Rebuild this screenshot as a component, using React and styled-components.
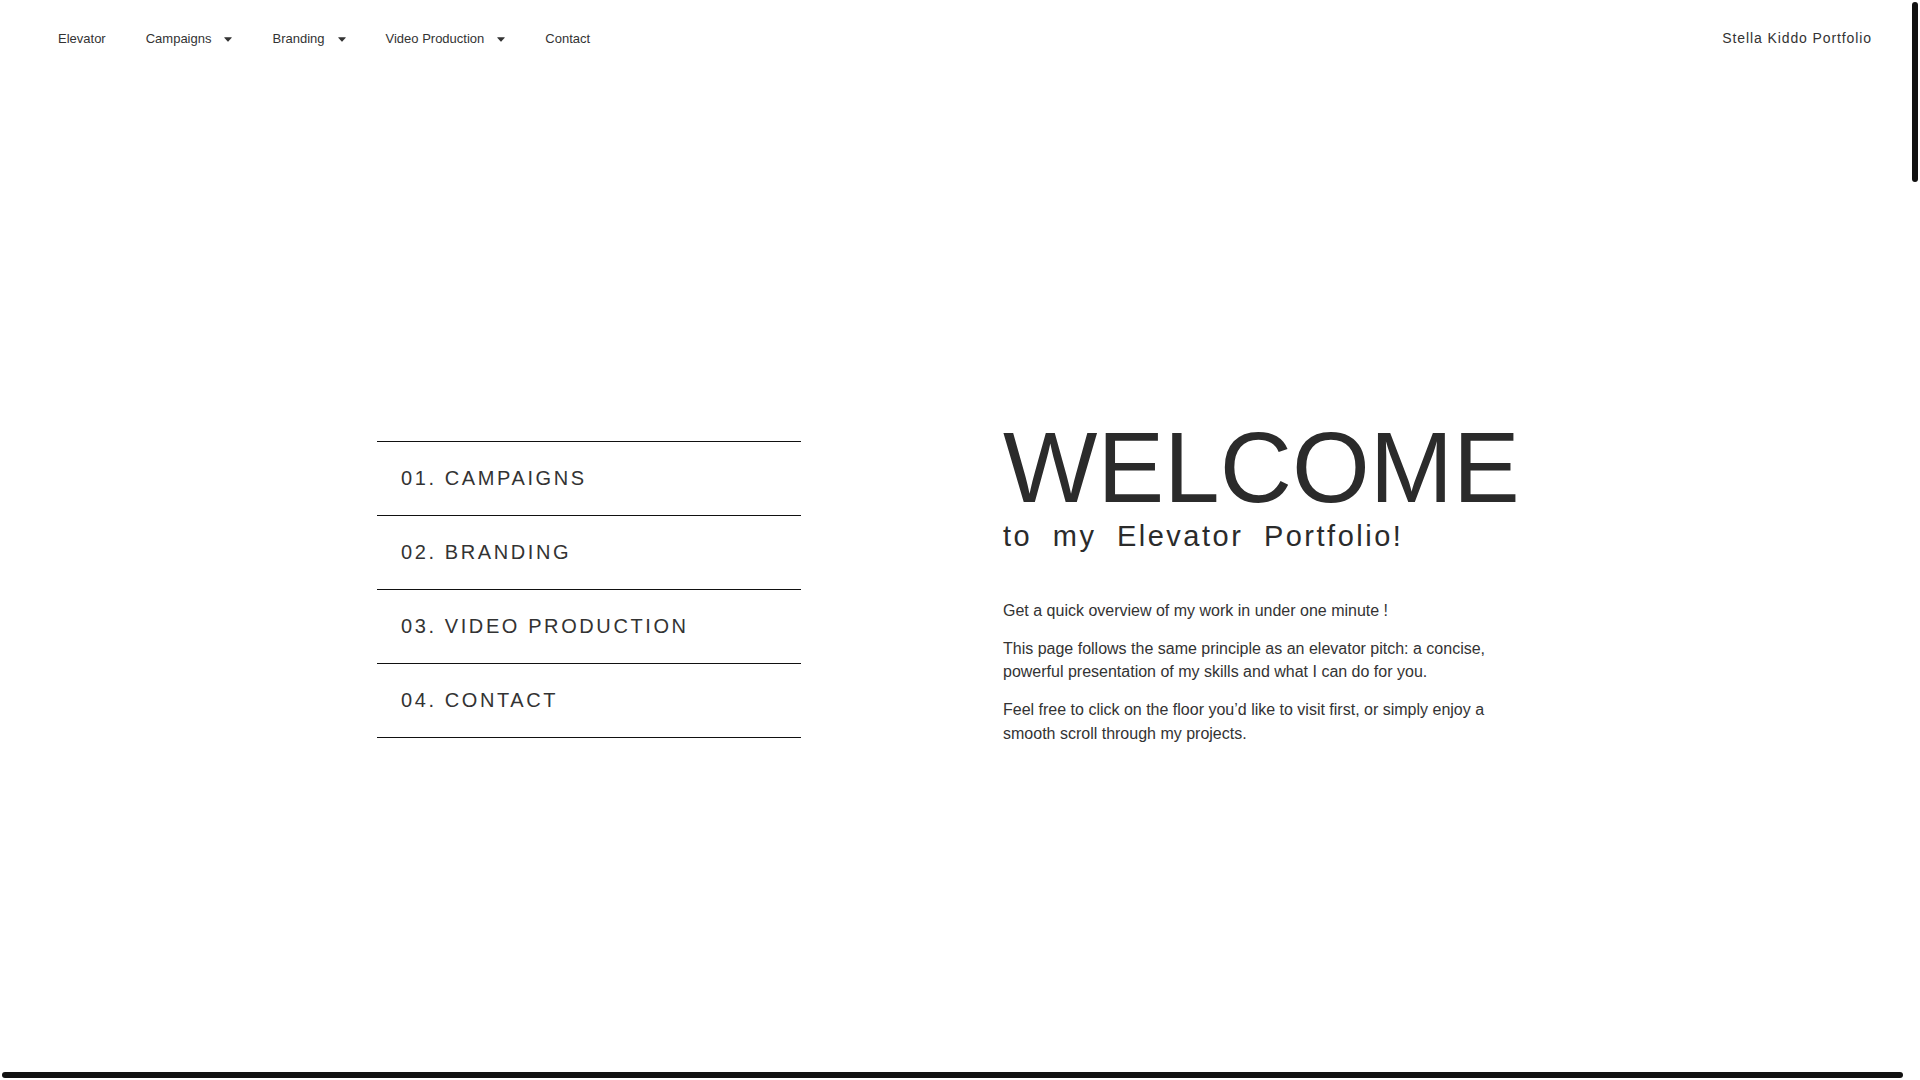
import styled, { createGlobalStyle, css } from "styled-components";

const GlobalStyle = createGlobalStyle`
  html, body {
    margin: 0;
    padding: 0;
    background: #fff;
  }
  body {
    font-family: "Liberation Sans", Arial, sans-serif;
    color: #333;
    overflow: hidden;
  }
`;

const StyledPage = styled.div`
  height: 100vh;
`;

const StyledHeader = styled.header`
  height: 76px;
  display: flex;
  align-items: center;
  justify-content: space-between;
  padding: 0 48px 0 38px;
  box-sizing: border-box;
`;

const StyledNav = styled.nav`
  display: flex;
  align-items: center;
  margin-top: 2px;
`;

const StyledNavItem = styled.a`
  display: flex;
  align-items: center;
  gap: 13px;
  padding: 0 20px;
  font-size: 13px;
  line-height: 20px;
  color: #333;
  text-decoration: none;
  cursor: pointer;
`;

const StyledCaret = styled.svg`
  width: 8px;
  height: 5px;
  fill: #333;
`;

const StyledSiteTitle = styled.div`
  font-size: 14px;
  line-height: 20px;
  letter-spacing: 0.9px;
  color: #333;
`;

const StyledHero = styled.section`
  width: 1166px;
  margin: 0 auto;
  padding-top: 341px;
  display: grid;
  grid-template-columns: 424px 1fr;
  column-gap: 202px;
  align-items: start;
`;

const StyledFloorList = styled.ul`
  list-style: none;
  margin: 24px 0 0;
  padding: 0;
`;

const StyledFloor = styled.li`
  height: 73px;
  border-top: 1px solid #111;
  display: flex;
  align-items: center;
  padding-left: 24px;
  font-size: 20px;
  letter-spacing: 2.6px;
  color: #333;
  cursor: pointer;

  &:last-child {
    border-bottom: 1px solid #111;
  }
`;

const StyledIntro = styled.div`
  max-width: 520px;
`;

const StyledTitle = styled.h1`
  margin: 0;
  font-size: 100px;
  line-height: 1;
  font-weight: 400;
  color: #2b2b2b;
`;

const StyledSubtitle = styled.h2`
  margin: 2px 0 0;
  font-size: 29px;
  line-height: 1.2;
  font-weight: 400;
  letter-spacing: 2.5px;
  word-spacing: 10px;
  color: #2b2b2b;
`;

const StyledText = styled.div`
  margin-top: 45px;
`;

const StyledParagraph = styled.p`
  margin: 0 0 14.4px;
  font-size: 16px;
  line-height: 23.6px;
  color: #333;
`;

const StyledScrollThumb = styled.div`
  position: fixed;
  background: #111;
  border-radius: 4px;

  ${(props) =>
    props.$axis === "y"
      ? css`
          top: 2px;
          right: 2px;
          width: 6px;
          height: 180px;
        `
      : css`
          left: 2px;
          bottom: 2px;
          width: 1901px;
          height: 6px;
        `}
`;

const navItems = [
  { label: "Elevator" },
  { label: "Campaigns", dropdown: true },
  { label: "Branding", dropdown: true },
  { label: "Video Production", dropdown: true },
  { label: "Contact" },
];

const floors = ["01. CAMPAIGNS", "02. BRANDING", "03. VIDEO PRODUCTION", "04. CONTACT"];

const Caret = () => (
  <StyledCaret viewBox="0 0 8 5">
    <path d="M0.4 0.3 H7.6 Q8 0.3 7.7 0.7 L4.3 4.6 Q4 4.9 3.7 4.6 L0.3 0.7 Q0 0.3 0.4 0.3 Z" />
  </StyledCaret>
);

const App = () => {
  return (
    <>
      <GlobalStyle />
      <StyledPage>
        <StyledHeader>
          <StyledNav>
            {navItems.map((item) => (
              <StyledNavItem key={item.label}>
                {item.label}
                {item.dropdown && <Caret />}
              </StyledNavItem>
            ))}
          </StyledNav>
          <StyledSiteTitle>Stella Kiddo Portfolio</StyledSiteTitle>
        </StyledHeader>

        <StyledHero>
          <StyledFloorList>
            {floors.map((floor) => (
              <StyledFloor key={floor}>{floor}</StyledFloor>
            ))}
          </StyledFloorList>

          <StyledIntro>
            <StyledTitle>WELCOME</StyledTitle>
            <StyledSubtitle>to my Elevator Portfolio!</StyledSubtitle>
            <StyledText>
              <StyledParagraph>Get a quick overview of my work in under one minute !</StyledParagraph>
              <StyledParagraph>
                This page follows the same principle as an elevator pitch: a concise, powerful presentation of my
                skills and what I can do for you.
              </StyledParagraph>
              <StyledParagraph>
                Feel free to click on the floor you’d like to visit first, or simply enjoy a smooth scroll through
                my projects.
              </StyledParagraph>
            </StyledText>
          </StyledIntro>
        </StyledHero>
      </StyledPage>

      {/* page scroll indicators */}
      <StyledScrollThumb $axis="y" />
      <StyledScrollThumb $axis="x" />
    </>
  );
};

export default App;
